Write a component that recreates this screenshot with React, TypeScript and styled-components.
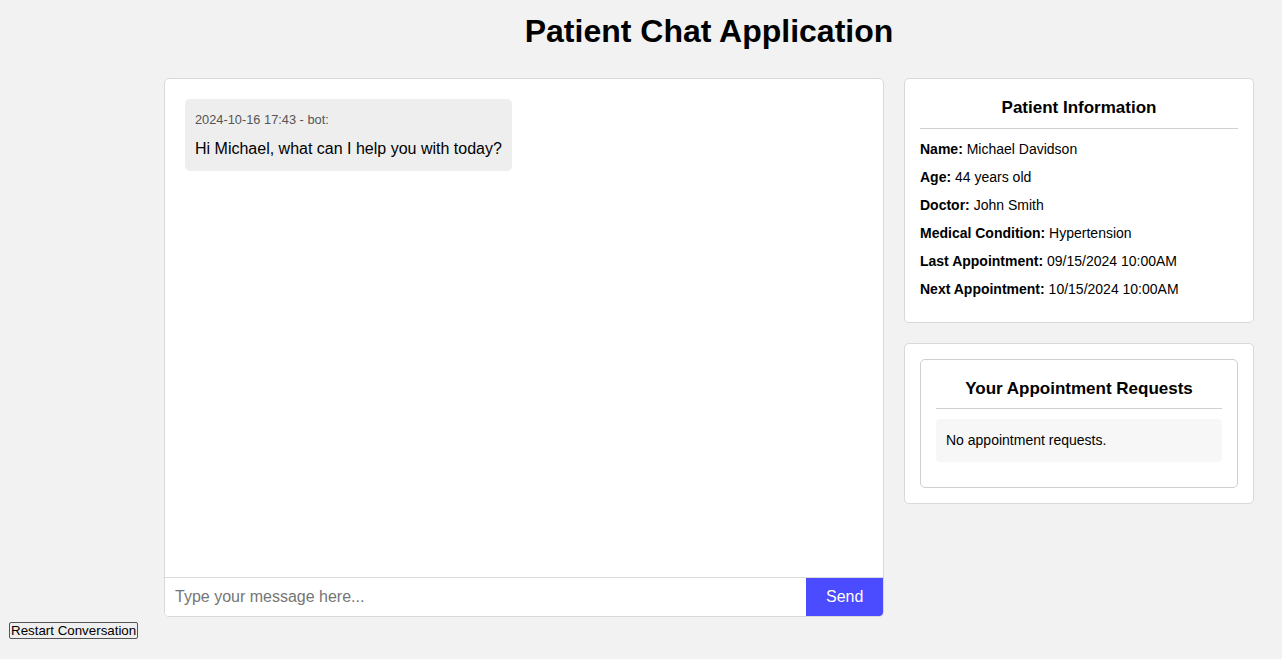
import React from "react";
import styled, { createGlobalStyle } from "styled-components";

const GlobalStyle = createGlobalStyle`
  html, body { background: #f2f2f2; }
  body {
    margin: 8px;
    font-family: "Liberation Sans", Arial, sans-serif;
    color: #000;
  }
`;

const Page = styled.div`
  width: 1090px;
  margin-left: 156px;
  line-height: 1.5;
`;

const Title = styled.h1`
  margin: 0 0 22px;
  font-size: 32px;
  line-height: 46px;
  padding-bottom: 2px;
  font-weight: bold;
  text-align: center;
`;

const Layout = styled.div`
  display: flex;
  align-items: flex-start;
  gap: 20px;
`;

const ChatBox = styled.div`
  width: 720px;
  height: 539px;
  box-sizing: border-box;
  background: #fff;
  border: 1px solid #d9d9d9;
  border-radius: 5px;
  display: flex;
  flex-direction: column;
  overflow: hidden;
`;

const Messages = styled.div`
  flex: 1;
  padding: 20px;
  display: flex;
  flex-direction: column;
  align-items: flex-start;
`;

const Bubble = styled.div`
  background: #eeeeee;
  border-radius: 5px;
  padding: 10px;
`;

const Stamp = styled.div`
  font-size: 12.8px;
  color: #555;
  margin-bottom: 8px;
  padding-top: 1px;
`;

const Text = styled.div`
  font-size: 16px;
`;

const InputRow = styled.div`
  display: flex;
  border-top: 1px solid #d9d9d9;
`;

const Input = styled.input`
  flex: 1;
  border: none;
  outline: none;
  padding: 10px;
  font-family: "Liberation Sans", Arial, sans-serif;
  font-size: 16px;
  line-height: 18px;
  &::placeholder { color: #757575; }
`;

const SendButton = styled.button`
  border: none;
  background: #4b4bff;
  color: #fff;
  font-family: "Liberation Sans", Arial, sans-serif;
  font-size: 16px;
  line-height: 18.4px;
  padding: 10px 20px;
  width: 77px;
  cursor: pointer;
`;

const Sidebar = styled.div`
  width: 350px;
  display: flex;
  flex-direction: column;
  gap: 20px;
`;

const Card = styled.div<{ $inner?: boolean }>`
  background: #fff;
  border: 1px solid ${(p) => (p.$inner ? "#cfcfcf" : "#d9d9d9")};
  border-radius: 5px;
  padding: 15px;
`;

const CardTitle = styled.h3`
  margin: 0 0 10px;
  padding-top: 1px;
  padding-bottom: 7px;
  border-bottom: 1px solid #d0d0d0;
  font-size: 17px;
  line-height: 25.5px;
  font-weight: bold;
  text-align: center;
`;

const InfoRow = styled.p`
  margin: 0 0 7px;
  font-size: 14px;
  line-height: 21px;
`;

const Empty = styled.div`
  background: #f7f7f7;
  border-radius: 4px;
  padding: 11px 10px;
  font-size: 14px;
  line-height: 21px;
  margin-bottom: 10px;
`;

const RestartWrap = styled.div`
  margin-top: 4px;
  margin-left: 1px;
`;

const RestartButton = styled.button`
  font-family: "Liberation Sans", Arial, sans-serif;
  font-size: 13.33px;
  line-height: 15px;
  padding: 0 1px;
  border: 1px solid #555;
  border-radius: 2px;
  background: #efefef;
  color: #000;
`;

const info: [string, string][] = [
  ["Name:", "Michael Davidson"],
  ["Age:", "44 years old"],
  ["Doctor:", "John Smith"],
  ["Medical Condition:", "Hypertension"],
  ["Last Appointment:", "09/15/2024 10:00AM"],
  ["Next Appointment:", "10/15/2024 10:00AM"],
];

export default function App() {
  return (
    <>
      <GlobalStyle />
      <Page>
        <Title>Patient Chat Application</Title>
        <Layout>
          <ChatBox>
            <Messages>
              <Bubble>
                <Stamp>2024-10-16 17:43 - bot:</Stamp>
                <Text>Hi Michael, what can I help you with today?</Text>
              </Bubble>
            </Messages>
            <InputRow>
              <Input placeholder="Type your message here..." />
              <SendButton>Send</SendButton>
            </InputRow>
          </ChatBox>
          <Sidebar>
            <Card>
              <CardTitle>Patient Information</CardTitle>
              {info.map(([k, v]) => (
                <InfoRow key={k}>
                  <strong>{k}</strong> {v}
                </InfoRow>
              ))}
            </Card>
            <Card>
              <Card $inner>
                <CardTitle>Your Appointment Requests</CardTitle>
                <Empty>No appointment requests.</Empty>
              </Card>
            </Card>
          </Sidebar>
        </Layout>
      </Page>
      <RestartWrap>
        <RestartButton>Restart Conversation</RestartButton>
      </RestartWrap>
    </>
  );
}
